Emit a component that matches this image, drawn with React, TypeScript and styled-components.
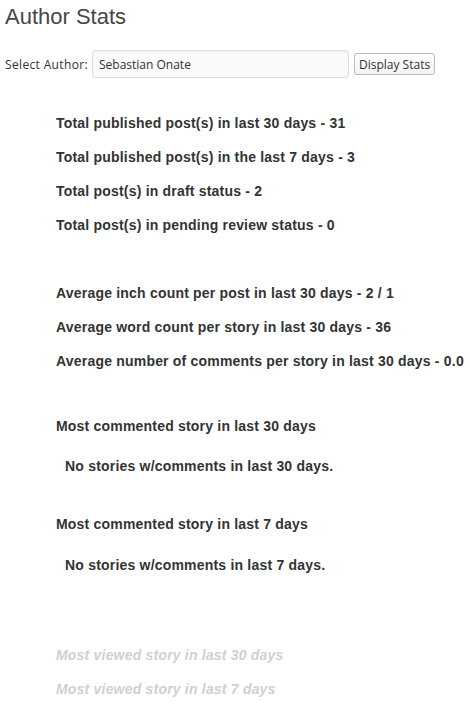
import styled, { createGlobalStyle } from 'styled-components';

const GlobalStyle = createGlobalStyle`
  body {
    margin: 0;
    background: #fff;
    font-family: 'Liberation Sans', Arial, sans-serif;
  }
`;

const Page = styled.div`
  width: 470px;
  padding-bottom: 20px;
`;

const Title = styled.h2`
  margin: 0;
  padding: 2px 5px 0;
  font-family: 'Liberation Sans', Arial, sans-serif;
  font-weight: 400;
  font-size: 22px;
  line-height: 30px;
  color: #464646;
`;

const FormRow = styled.form`
  display: flex;
  align-items: center;
  gap: 4px;
  margin-top: 18px;
  padding-left: 5px;
  height: 28px;
  font-family: 'Open Sans', 'DejaVu Sans', sans-serif;
  font-size: 12px;
  color: #333;
`;

const Label = styled.label`
  white-space: nowrap;
  letter-spacing: 0.35px;
`;

const AuthorInput = styled.input`
  box-sizing: border-box;
  width: 257px;
  height: 28px;
  padding: 0 6px;
  border: 1px solid #dfdfdf;
  border-radius: 3px;
  background: #fafafa;
  box-shadow: inset 0 1px 2px rgba(0, 0, 0, 0.07);
  font-family: 'Open Sans', 'DejaVu Sans', sans-serif;
  font-size: 12px;
  color: #333;
  outline: none;
`;

const Button = styled.button`
  box-sizing: border-box;
  height: 22px;
  margin-left: 1px;
  padding: 0 4px;
  border: 1px solid #bbb;
  border-radius: 3px;
  background: linear-gradient(#fff, #f3f3f3);
  font-family: 'Open Sans', 'DejaVu Sans', sans-serif;
  font-size: 12px;
  color: #333;
`;

const Stats = styled.div`
  padding-left: 56px;
`;

const Section = styled.div<{ $top: number; $gap: number }>`
  display: flex;
  flex-direction: column;
  gap: ${(p) => p.$gap}px;
  margin-top: ${(p) => p.$top}px;
`;

const Line = styled.div<{ $muted?: boolean; $indent?: boolean }>`
  font-family: 'Liberation Sans', Arial, sans-serif;
  font-size: 14px;
  letter-spacing: 0.2px;
  line-height: 16px;
  font-weight: 700;
  white-space: nowrap;
  color: ${(p) => (p.$muted ? '#d0d0d0' : '#333333')};
  font-style: ${(p) => (p.$muted ? 'italic' : 'normal')};
  padding-left: ${(p) => (p.$indent ? '9px' : '0')};
`;

export default function App() {
  return (
    <Page>
      <GlobalStyle />
      <Title>Author Stats</Title>
      <FormRow onSubmit={(e) => e.preventDefault()}>
        <Label>Select Author:</Label>
        <AuthorInput defaultValue="Sebastian Onate" />
        <Button type="submit">Display Stats</Button>
      </FormRow>
      <Stats>
        <Section $top={37} $gap={18}>
          <Line>Total published post(s) in last 30 days - 31</Line>
          <Line>Total published post(s) in the last 7 days - 3</Line>
          <Line>Total post(s) in draft status - 2</Line>
          <Line>Total post(s) in pending review status - 0</Line>
        </Section>
        <Section $top={52} $gap={18}>
          <Line>Average inch count per post in last 30 days - 2 / 1</Line>
          <Line>Average word count per story in last 30 days - 36</Line>
          <Line>Average number of comments per story in last 30 days - 0.0</Line>
        </Section>
        <Section $top={49} $gap={24}>
          <Line>Most commented story in last 30 days</Line>
          <Line $indent>No stories w/comments in last 30 days.</Line>
        </Section>
        <Section $top={42} $gap={25}>
          <Line>Most commented story in last 7 days</Line>
          <Line $indent>No stories w/comments in last 7 days.</Line>
        </Section>
        <Section $top={74} $gap={18}>
          <Line $muted>Most viewed story in last 30 days</Line>
          <Line $muted>Most viewed story in last 7 days</Line>
        </Section>
      </Stats>
    </Page>
  );
}
